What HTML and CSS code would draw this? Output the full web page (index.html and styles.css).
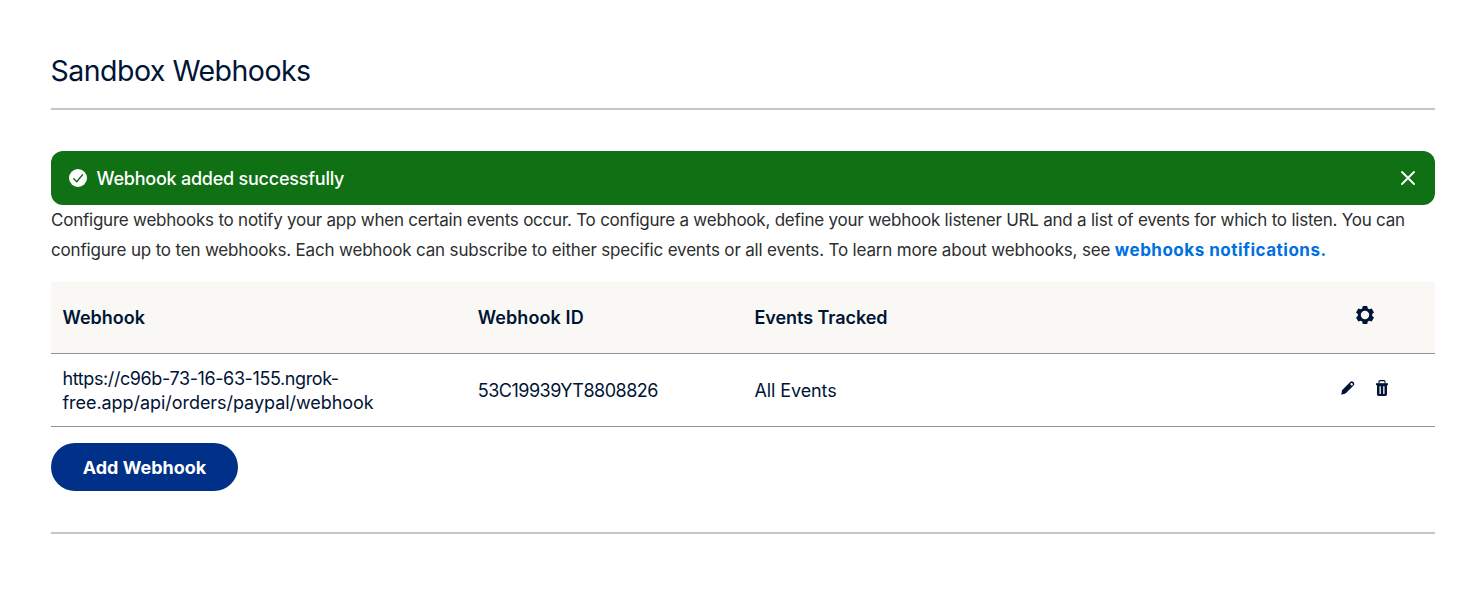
FILE: index.html
```html
<!DOCTYPE html>
<html lang="en">
<head>
<meta charset="utf-8">
<title>Sandbox Webhooks</title>
<link rel="stylesheet" href="styles.css">
</head>
<body>
<main class="page">
  <h1 class="title"><span>Sandbox Webhooks</span></h1>
  <div class="alert">
    <svg class="alert-icon" viewBox="0 0 18 18"><circle cx="9" cy="9" r="9" fill="#fff"/><path d="M4.7 9.8 7.7 12.8 13.5 5.7" fill="none" stroke="#107014" stroke-width="1.4" stroke-linecap="round" stroke-linejoin="round"/></svg>
    <span class="alert-text">Webhook added successfully</span>
    <svg class="alert-close" viewBox="0 0 16 16"><path d="M2 2 14 14M14 2 2 14" fill="none" stroke="#fff" stroke-width="1.9" stroke-linecap="round"/></svg>
  </div>
  <p class="intro"><span class="line-one">Configure webhooks to notify your app when certain events occur. To configure a webhook, define your webhook listener URL and a list of events for which to listen. You can</span><br><span class="line-two">configure up to ten webhooks. Each webhook can subscribe to either specific events or all events. To learn more about webhooks, see </span><a class="link">webhooks notifications.</a></p>
  <div class="row head">
    <div><span class="h-one">Webhook</span></div>
    <div><span class="h-two">Webhook ID</span></div>
    <div><span class="h-three">Events Tracked</span></div>
    <div class="settings"><svg class="gear" viewBox="0 0 18 18"><path fill="#001435" fill-rule="evenodd" d="M6.8 0h4.4l.6 2.4 1.5.9 2.4-.7L18 6.4 16.2 8.1v1.8l1.8 1.7-2.3 3.8-2.4-.7-1.5.9-.6 2.4H6.8l-.6-2.4-1.5-.9-2.4.7L0 11.6l1.8-1.7V8.1L0 6.4l2.3-3.8 2.4.7 1.5-.9zM9 4.8a4.2 4.2 0 1 0 0 8.4 4.2 4.2 0 0 0 0-8.4z"/></svg></div>
  </div>
  <div class="row item">
    <div><span class="url-one">https://c96b-73-16-63-155.ngrok-</span><br><span class="url-two">free.app/api/orders/paypal/webhook</span></div>
    <div><span class="id">53C19939YT8808826</span></div>
    <div><span class="events">All Events</span></div>
    <div class="actions">
      <svg class="pencil" viewBox="0 0 14 14"><path fill="#001435" fill-rule="evenodd" d="M1 9.2 9.2 1Q10.7-.3 12.4 1.1 14 2.7 12.8 4.3L4.5 12.5.3 13.8zM10 2.2 9.1 3.1 10.8 4.8 11.7 3.9Q12.2 3 11.5 2.4 10.8 1.7 10 2.2z"/></svg>
      <svg class="trash" viewBox="0 0 12 16"><path d="M3 3.5V1.6Q3 .6 4 .6h4q1 0 1 1v1.9" fill="none" stroke="#001435" stroke-width="1.1"/><path d="M0 3.2h12v2H0z" fill="#001435"/><path fill="#001435" fill-rule="evenodd" d="M1 5h10v9.3Q11 16 9.5 16h-7Q1 16 1 14.3zM3.5 6.3v7.8h1.3V6.3zm3.7 0v7.8h1.3V6.3z"/></svg>
    </div>
  </div>
  <button class="add"><span>Add Webhook</span></button>
  <hr class="rule">
</main>
</body>
</html>
```
FILE: styles.css
```css
* { box-sizing: border-box; }
body { margin: 0; background: #fff; color: #001435; font-family: Inter, "Liberation Sans", sans-serif; font-size: 18px; }
svg { display: block; flex: none; }
.page { width: 1384px; margin-left: 51px; padding-top: 50px; }
.title { margin: 0 0 41px; height: 60px; border-bottom: 2px solid #c6c6c6; font-size: 28.5px; line-height: 41px; font-weight: 400; letter-spacing: -0.52px; text-indent: -0.5px; }
.alert { display: flex; align-items: center; height: 54px; padding: 0 19px 0 18px; border-radius: 12px; background: #107014; color: #fff; font-weight: 500; }
.alert-icon { width: 18px; height: 18px; margin-right: 9.5px; }
.alert-text { letter-spacing: -0.23px; padding-top: 1px; }
.alert-close { width: 16px; height: 16px; margin-left: auto; }
.intro { margin: 0 0 17px; height: 60px; line-height: 30px; font-size: 17px; color: #2c2e2f; white-space: nowrap; }
.line-one { letter-spacing: -0.231px; }
.line-two { letter-spacing: -0.174px; }
.link { color: #0070e0; font-weight: 700; letter-spacing: 0.5px; }
.row { display: grid; grid-template-columns: 30% 20% 40% 10%; align-items: center; border-bottom: 1px solid #909697; white-space: nowrap; }
.row > div { padding-left: 11.5px; }
.head { height: 72px; background: #faf8f5; font-weight: 600; }
.h-two { letter-spacing: 0.1px; }
.h-three { letter-spacing: -0.06px; }
.item { height: 73px; padding-top: 2px; line-height: 24px; }
.url-one { letter-spacing: -0.4px; }
.url-two { letter-spacing: -0.05px; }
.id { letter-spacing: -0.5px; }
.events { letter-spacing: -0.1px; }
.row > .settings { padding: 0 0 6px 59px; }
.gear { width: 18px; height: 18px; }
.row > .actions { display: flex; align-items: center; padding: 0 0 7px 44.6px; }
.pencil { width: 14px; height: 14px; margin-right: 20.4px; }
.trash { width: 12px; height: 16px; }
.add { display: block; width: 187px; height: 48px; margin: 16px 0 41px; padding: 0; border: 0; border-radius: 24px; background: #003087; color: #fff; font: 700 18px Inter, "Liberation Sans", sans-serif; }
.rule { margin: 0; border: 0; height: 2px; background: #c6c6c6; }
```
